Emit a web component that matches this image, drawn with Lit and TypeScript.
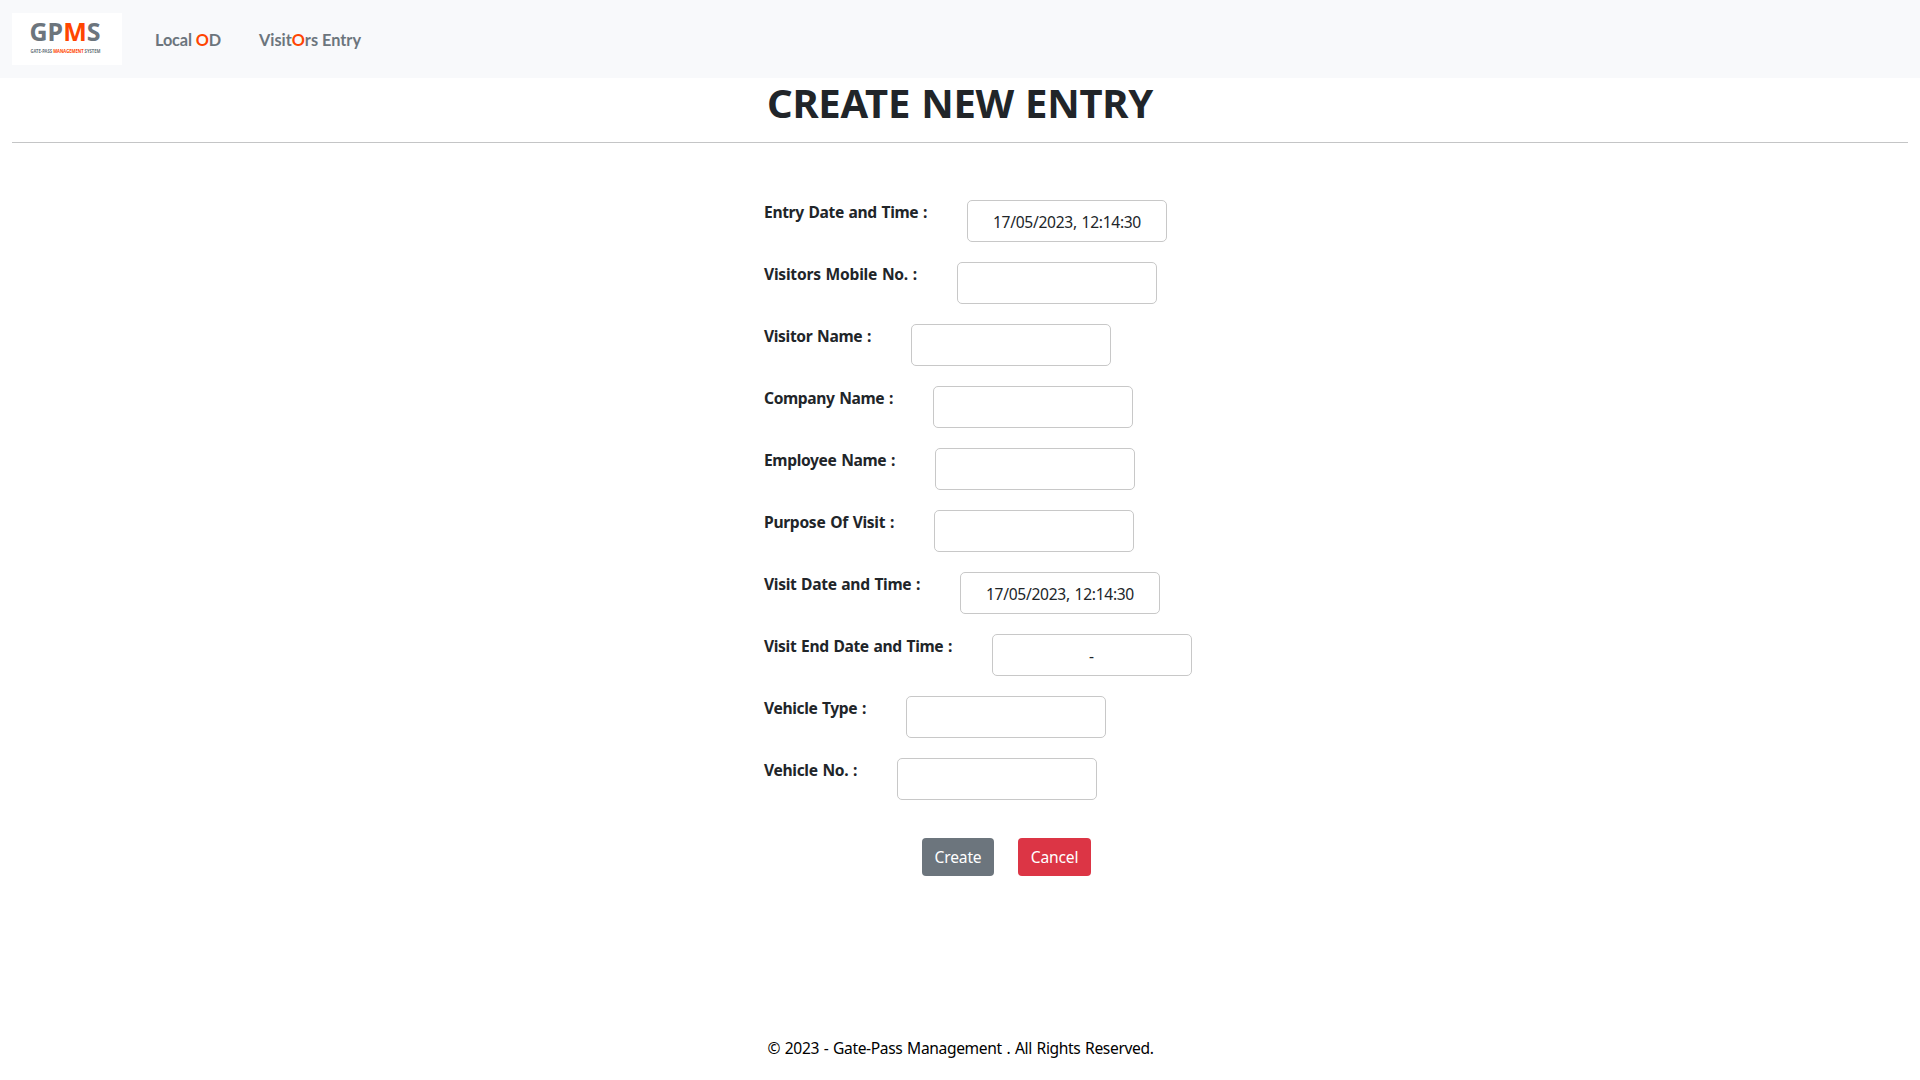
import { LitElement, html, css } from "lit";
import { customElement, property, state } from "lit/decorators.js";

/** One line of text whose tracking is adjusted so that it takes exactly `width` pixels. */
@customElement("fit-text")
class FitText extends LitElement {
  @property({ type: Number }) width = 0;

  static styles = css`
    :host { display: inline-block; white-space: nowrap; }
    .text { display: inline-block; white-space: pre; }
  `;

  firstUpdated() {
    const text = this.renderRoot.querySelector<HTMLElement>(".text")!;
    const count = (this.textContent ?? "").length;
    const natural = text.getBoundingClientRect().width;
    if (count && natural) {
      this.style.letterSpacing = `${(this.width - natural) / count}px`;
    }
  }

  render() {
    return html`<span class="text"><slot></slot></span>`;
  }
}

interface Field {
  label: string;
  width: number;
  value?: string;
  valueWidth?: number;
}

@customElement("app-root")
class AppRoot extends LitElement {
  @state() private fields: Field[] = [
    { label: "Entry Date and Time :", width: 163, value: "17/05/2023, 12:14:30", valueWidth: 148 },
    { label: "Visitors Mobile No. :", width: 153 },
    { label: "Visitor Name :", width: 107 },
    { label: "Company Name :", width: 129 },
    { label: "Employee Name :", width: 131 },
    { label: "Purpose Of Visit :", width: 130 },
    { label: "Visit Date and Time :", width: 156, value: "17/05/2023, 12:14:30", valueWidth: 148 },
    { label: "Visit End Date and Time :", width: 188, value: "-", valueWidth: 6 },
    { label: "Vehicle Type :", width: 102 },
    { label: "Vehicle No. :", width: 93 },
  ];

  static styles = css`
    :host {
      display: flex;
      flex-direction: column;
      height: 1080px;
      overflow: hidden;
      background: #fff;
      color: #212529;
      font: 15.6px/24px "Noto Sans", "Open Sans", sans-serif;
      word-spacing: 1px;
    }
    * { box-sizing: border-box; }
    .nav {
      display: flex;
      align-items: center;
      flex: none;
      height: 78px;
      padding: 0 12px;
      background: #f8f9fb;
      color: #6c757d;
      font: bold 16.3px/24px Lato, "Noto Sans", sans-serif;
      word-spacing: 0;
    }
    .logo { width: 110px; height: 52px; margin-right: 33px; background: #fff; }
    .logo-main { font: bold 25px "Noto Sans", sans-serif; fill: #6c757d; }
    .logo-sub { font: bold 4.3px "Noto Sans", sans-serif; fill: #6c757d; }
    .hot { color: #ff4500; fill: #ff4500; }
    .link { color: inherit; text-decoration: none; margin-right: 38px; padding-top: 2px; }
    h1 {
      flex: none;
      height: 65px;
      margin: 0 12px;
      padding-top: 1px;
      text-align: center;
      font-size: 40px;
      font-weight: 700;
      line-height: 48px;
      border-bottom: 1px solid #c4c5c6;
    }
    form {
      display: flex;
      flex-direction: column;
      gap: 20px;
      flex: none;
      width: 440px;
      margin: 57px 0 0 764px;
    }
    .row { display: flex; gap: 40px; height: 42px; }
    .label { font-weight: 700; }
    .box {
      display: flex;
      flex: none;
      align-items: center;
      justify-content: center;
      width: 200px;
      height: 42px;
      padding-top: 1px;
      border: 1px solid #c8c8c8;
      border-radius: 5px;
    }
    .actions { display: flex; gap: 24px; margin: 18px 0 0 158px; }
    .btn {
      display: flex;
      align-items: center;
      justify-content: center;
      width: 72px;
      height: 38px;
      padding: 0;
      border: 0;
      border-radius: 4px;
      background: #6c757d;
      color: #fff;
      font: inherit;
    }
    .btn.danger { width: 73px; background: #dc3545; }
    footer { margin: auto 0 20px; padding-left: 1px; text-align: center; color: #000; }
  `;

  render() {
    return html`
      <nav class="nav">
        <svg class="logo" viewBox="0 0 110 52">
          <text class="logo-main" x="17.5" y="28" textLength="71" lengthAdjust="spacingAndGlyphs">GP<tspan class="hot">M</tspan>S</text>
          <text class="logo-sub" x="18.5" y="40" textLength="70" lengthAdjust="spacingAndGlyphs">GATE-PASS <tspan class="hot">MANAGEMENT</tspan> SYSTEM</text>
        </svg>
        <a class="link"><fit-text width="66">Local <span class="hot">O</span>D</fit-text></a>
        <a class="link"><fit-text width="102">Visit<span class="hot">O</span>rs Entry</fit-text></a>
      </nav>
      <h1><fit-text width="386">CREATE NEW ENTRY</fit-text></h1>
      <form>
        ${this.fields.map(
          (f) => html`<div class="row">
            <fit-text class="label" width=${f.width}>${f.label}</fit-text>
            <div class="box">
              ${f.value ? html`<fit-text width=${f.valueWidth ?? 0}>${f.value}</fit-text>` : ""}
            </div>
          </div>`
        )}
        <div class="actions">
          <button class="btn" type="button"><fit-text width="47">Create</fit-text></button>
          <button class="btn danger" type="button"><fit-text width="47.5">Cancel</fit-text></button>
        </div>
      </form>
      <footer><fit-text width="386">© 2023 - Gate-Pass Management . All Rights Reserved.</fit-text></footer>
    `;
  }
}
